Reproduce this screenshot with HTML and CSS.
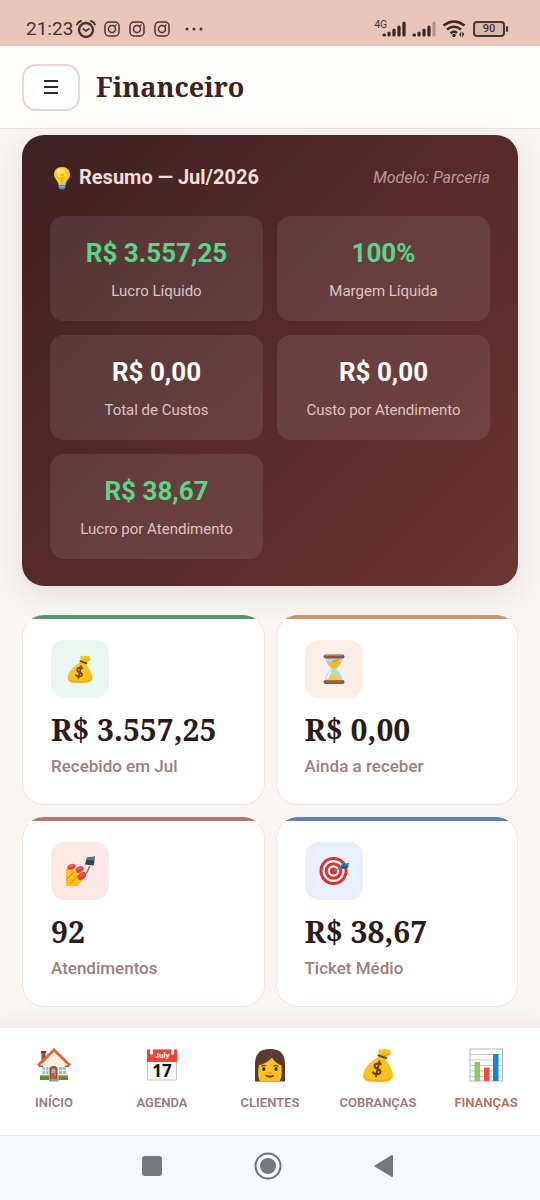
FILE: index.html
```html
<!DOCTYPE html>
<html lang="pt-BR">
<head>
    <meta charset="UTF-8">
    <meta name="viewport" content="width=device-width, initial-scale=1.0">
    <title>Financeiro</title>
    <link rel="stylesheet" href="styles.css">
</head>
<body>

<svg class="sprite" aria-hidden="true">
    <symbol id="insta" viewBox="0 0 16 16">
        <rect x="1" y="1" width="14" height="14" rx="4" fill="none" stroke="#4a3230" stroke-width="1.5"/>
        <circle cx="8" cy="8" r="3.5" fill="none" stroke="#4a3230" stroke-width="1.5"/>
        <path d="M10.500 5.500l1.500-1.500" stroke="#4a3230" stroke-width="1.3" stroke-linecap="round"/>
    </symbol>
    <symbol id="money" viewBox="0 0 32 32">
        <path d="M17 8c-3 2-14 8-15 17-.4 4 2 6 6 6.400 5 .6 12 .5 17-.2 4-.6 5.600-3 5-6.700C29 18 24 12 22 9z" fill="#fcc21b"/>
        <path d="M2.500 25c.5 3.500 4 4.500 9 4.700 7 .3 14 0 17.500-2.500-.6 2.400-2 3.600-4 4-5 .7-12 .8-17 .2-4-.4-6-2.900-5.500-6.400z" fill="#f4ae13"/>
        <path d="M17 7c0-2-1-3.500-.8-5 .6-1.600 2.700-.6 3.700-.1C21 .5 23 0 24 1.700c1.700-.9 4-.4 3.500 1.600 1.600 1 1 2.600-.5 3.200-1.500.5-2 1.700-3 3z" fill="#fcc21b"/>
        <path d="M20 6l4-2M22 7l4-1" stroke="#d99312" stroke-width=".7"/>
        <path d="M16.500 7l7 2.500" stroke="#6d4422" stroke-width="2" stroke-linecap="round"/>
        <path d="M19.300 15.800c-1-1.900-6.500-1.900-6.500 1.200 0 3.500 6.200 2.200 5.500 5.700-.6 2.900-6.300 2.500-7.300-.5M17.500 11.800l-3.600 15.500" fill="none" stroke="#6d4422" stroke-width="2"/>
    </symbol>
</svg>

<div class="statusbar">
    <div class="status-left">
        <span class="clock">21:23</span>
        <svg class="alarm" viewBox="0 0 20 20" width="20" height="20">
            <circle cx="10" cy="11" r="7" fill="none" stroke="#4a3230" stroke-width="2.400"/>
            <path d="M1 5.500Q2 3 5 2M15 2q3 1 4 3.500" fill="none" stroke="#4a3230" stroke-width="2" stroke-linecap="round"/>
            <path d="M7.200 10l2.800 2 2.800-2" fill="none" stroke="#4a3230" stroke-width="1.800" stroke-linecap="round"/>
        </svg>
        <svg class="insta" width="16" height="16"><use href="#insta"/></svg>
        <svg class="insta" width="16" height="16"><use href="#insta"/></svg>
        <svg class="insta" width="16" height="16"><use href="#insta"/></svg>
        <svg class="dots" viewBox="0 0 20 4" width="20" height="4" fill="#4a3230">
            <circle cx="3" cy="2" r="1.500"/><circle cx="10" cy="2" r="1.500"/><circle cx="17" cy="2" r="1.500"/>
        </svg>
    </div>
    <div class="status-right">
        <span class="net">4G</span>
        <svg viewBox="0 0 24 16" width="24" height="16" stroke="#3a2624" stroke-width="3.200" stroke-linecap="round">
            <path d="M2 14h.5M7 14v-2M12 14v-5M17 14v-8M22 14v-12"/>
        </svg>
        <svg class="signal" viewBox="0 0 24 16" width="24" height="16" stroke="#3a2624" stroke-width="3.200" stroke-linecap="round">
            <path d="M2 14h.5M7 14v-2M12 14v-5M17 14v-8"/>
            <path d="M22 14v-12" stroke="#b4928c"/>
        </svg>
        <svg class="wifi" viewBox="0 0 24 18" width="24" height="18">
            <path d="M1.500 5.500Q12-2.500 22.500 5.500M5 9.500q7-5.500 14 0M8.500 13.200q3.500-2.700 6.500-.3" fill="none" stroke="#3a2624" stroke-width="2.600"/>
            <circle cx="12" cy="15.500" r="1.800" fill="#3a2624"/>
            <path d="M17.200 14.500l2-3v6zM20.300 11.500v6l2-3.200z" fill="#3a2624"/>
        </svg>
        <div class="battery">90</div>
    </div>
</div>

<header class="topbar">
    <button class="menu-btn" aria-label="Menu">
        <svg viewBox="0 0 14 14" width="14" height="14" stroke="#3d2422" stroke-width="2"><path d="M0 1h14M0 7h14M0 13h14"/></svg>
    </button>
    <h1>Financeiro</h1>
</header>

<main class="content">
    <section class="resumo">
        <div class="resumo-head">
            <h2>
                <svg viewBox="0 0 20 24" width="20" height="24">
                    <path d="M6 15.500h8l-.8 6q-.2 2-3.200 2t-3.200-2z" fill="#5d8397"/>
                    <path d="M6.500 18.500h7M6.700 20.800h6.500" stroke="#a7c6d2" stroke-width="1"/>
                    <path d="M10 1C4.800 1 2 4.500 2 8.500c0 4.500 3.600 5.300 4.100 9q3.900 1 7.800 0c.5-3.700 4.100-4.500 4.100-9C18 4.500 15.200 1 10 1z" fill="#fbcb1d"/>
                    <circle cx="9.500" cy="7.500" r="4.500" fill="#fde447"/>
                    <path d="M8 8l1.200 2 1-2 1 2 1-2M9 10.500l.5 6M11 10.500l-.3 6" fill="none" stroke="#e79a14" stroke-width=".8"/>
                    <ellipse cx="6.500" cy="4.800" rx="1.500" ry="2" transform="rotate(35 6.500 4.800)" fill="#fff7b0"/>
                </svg>
                Resumo — Jul/2026
            </h2>
            <span class="modelo">Modelo: Parceria</span>
        </div>
        <div class="resumo-grid">
            <div class="resumo-item"><strong class="green">R$ 3.557,25</strong><span>Lucro Líquido</span></div>
            <div class="resumo-item"><strong class="green">100%</strong><span>Margem Líquida</span></div>
            <div class="resumo-item"><strong>R$ 0,00</strong><span>Total de Custos</span></div>
            <div class="resumo-item"><strong>R$ 0,00</strong><span>Custo por Atendimento</span></div>
            <div class="resumo-item"><strong class="green">R$ 38,67</strong><span>Lucro por Atendimento</span></div>
        </div>
    </section>

    <section class="cards">
        <article class="card card-green">
            <div class="card-icon"><svg width="28" height="30"><use href="#money"/></svg></div>
            <div class="card-value">R$ 3.557,25</div>
            <div class="card-label">Recebido em Jul</div>
        </article>
        <article class="card card-orange">
            <div class="card-icon">
                <svg viewBox="0 0 30 30" width="30" height="30">
                    <path d="M6.500 3h17c0 7-3.300 9-6.300 12 3 3 6.300 5 6.300 12h-17c0-7 3.300-9 6.300-12-3-3-6.300-5-6.300-12z" fill="#a9dcea"/>
                    <path d="M8 7.500q5 1.500 14-.8c-.8 3.800-3.500 5.500-5.500 8h-3C12 12 9 10.500 8 7.500z" fill="#fbb914"/>
                    <path d="M13.500 7q4 .5 7-2" stroke="#e28b12" stroke-width="1.500" fill="none"/>
                    <path d="M14.500 14h1v6c2.200 1 4.500 4.500 6.500 7H8c2-3 4.200-6 6.500-7z" fill="#fccb25"/>
                    <path d="M8.500 25c.1-3.500 1.700-5.700 3.500-7.400" fill="none" stroke="#e4f9fc" stroke-width="1.600"/>
                    <rect x="4.500" y=".5" width="21" height="4" rx="2" fill="#8c5543"/>
                    <rect x="4.500" y="26" width="21" height="4" rx="2" fill="#8c5543"/>
                    <path d="M6.500 1.500h17M6.500 27h17" stroke="#b47b62" stroke-width="1"/>
                </svg>
            </div>
            <div class="card-value">R$ 0,00</div>
            <div class="card-label">Ainda a receber</div>
        </article>
        <article class="card card-rose">
            <div class="card-icon">
                <svg viewBox="0 0 30 30" width="30" height="30">
                    <path d="M1 12.500l5-1 4 4 5-1 3 5 2 1-7 9.500H1z" fill="#fcc21b"/>
                    <path d="M2 23l7-7M5 28l9-9.500" stroke="#d38814" stroke-width="1"/>
                    <ellipse cx="6.500" cy="10.700" rx="4.200" ry="2.700" transform="rotate(-18 6.500 10.700)" fill="#e5413c"/>
                    <ellipse cx="14.500" cy="13.500" rx="4.200" ry="3" transform="rotate(-24 14.500 13.500)" fill="#e5413c"/>
                    <ellipse cx="17" cy="20" rx="4.800" ry="3.200" transform="rotate(-42 17 20)" fill="#e5413c"/>
                    <path d="M4 10.500l4-1.300M12.500 13l4-1.600M15 20l3-2.700" stroke="#f9877c" stroke-width=".9" stroke-linecap="round"/>
                    <path d="M24 10l-4.500 9.500 3-2.500 3-6.500z" fill="#688493"/>
                    <path d="M22 1.500l8-1-1.300 9-8.700-1z" fill="#2c424e"/>
                    <path d="M22.500 2l7-.9-.5 3.500-7.500-.6z" fill="#5c7886"/>
                </svg>
            </div>
            <div class="card-value">92</div>
            <div class="card-label">Atendimentos</div>
        </article>
        <article class="card card-blue">
            <div class="card-icon">
                <svg viewBox="0 0 30 30" width="30" height="30">
                    <circle cx="14.500" cy="15" r="14" fill="#d9332f"/>
                    <circle cx="14.500" cy="15" r="11" fill="#fff"/>
                    <circle cx="14.500" cy="15" r="8.800" fill="#d9332f"/>
                    <circle cx="14.500" cy="15" r="5.800" fill="#fff"/>
                    <circle cx="14.500" cy="15" r="3.600" fill="#d9332f"/>
                    <path d="M15 15l9-4" stroke="#5d86ad" stroke-width="1.400"/>
                    <path d="M21 11l4-6 1 2.500 4-.5-1 4.500-5 1.700z" fill="#1c78bd"/>
                    <path d="M22 12l6 .3 1.500-2.500-5 .2z" fill="#0c5695"/>
                </svg>
            </div>
            <div class="card-value">R$ 38,67</div>
            <div class="card-label">Ticket Médio</div>
        </article>
    </section>
</main>

<nav class="bottom-nav">
    <a href="#">
        <svg viewBox="0 0 34 34" width="34" height="34">
            <path d="M4.500 4h4v11h-4z" fill="#a34d2c"/>
            <path d="M4 3h5v2H4z" fill="#7c3b25"/>
            <path d="M4 17L17 3.500 30 17v14H4z" fill="#faf1df"/>
            <path d="M1 17.500L17 2l16 15.500" fill="none" stroke="#d8693c" stroke-width="3"/>
            <path d="M2 18.200h4M28 18.200h4" stroke="#b84e2d" stroke-width="1.400"/>
            <path d="M12.500 32V21q0-3 4-3t4 3v11z" fill="#a8432d"/>
            <path d="M14 31v-9.500q0-2 2.500-2t2.500 2V31z" fill="#c75c3e"/>
            <rect x="14.800" y="21" width="3.400" height="4" rx="1" fill="#91bbca"/>
            <path d="M5.500 19h6v7h-6zM22 19h7v7h-7z" fill="#89c9d8"/>
            <path d="M8.500 19v7M5.500 22.500h6M25.500 19v7M22 22.500h7" stroke="#f5efe2" stroke-width="1"/>
            <path d="M3 27.500h9V32H3zM21.500 27.500H31V32h-9.500z" fill="#5f8a36"/>
            <path d="M3 28h9M21.500 28H31" stroke="#87ad45" stroke-width="1"/>
            <path d="M12 31h9.500v2.500H12z" fill="#9a9a9a"/>
            <circle cx="18" cy="26.500" r=".7" fill="#fbd254"/>
        </svg>
        <span>Início</span>
    </a>
    <a href="#">
        <svg viewBox="0 0 34 34" width="34" height="34">
            <rect x="2.500" y="2" width="29" height="30" rx="1" fill="#fafafa" stroke="#c4c8ca"/>
            <path d="M2 1.500h30V14H2z" fill="#f1443a"/>
            <path d="M6.500 1v4M27.500 1v4" stroke="#fff" stroke-width="2.600" stroke-linecap="round"/>
            <circle cx="6.500" cy="5" r="1.800" fill="#fff"/><circle cx="27.500" cy="5" r="1.800" fill="#fff"/>
            <text class="cal-month" x="17" y="10">July</text>
            <text class="cal-day" x="17" y="29">17</text>
        </svg>
        <span>Agenda</span>
    </a>
    <a href="#">
        <svg viewBox="0 0 34 34" width="34" height="34">
            <path d="M17 1C6 1 2 7 2 16v17.500h30V16C32 7 28 1 17 1z" fill="#573b31"/>
            <path d="M7 33.500C4.500 29 5 22 6 17c5-1 10-3.500 13-7.500 1.500 3.500 5 6 9.500 8C29 23 29 29 26.500 33.500z" fill="#fcc21b"/>
            <path d="M19 3C18 11 11 16 5 17" fill="none" stroke="#704d3d" stroke-width="1.300"/>
            <path d="M8.500 18.500q2.500-2 4.500-.2M20.500 18.300q2.500-1.800 4.500.2" fill="none" stroke="#704526" stroke-width="1.200"/>
            <ellipse cx="10.800" cy="21" rx="1.600" ry="1.900" fill="#3d3030"/>
            <ellipse cx="23" cy="21" rx="1.600" ry="1.900" fill="#3d3030"/>
            <path d="M15.500 24.500q1.500 1 3 0" fill="none" stroke="#e39a18" stroke-width="1.400" stroke-linecap="round"/>
            <path d="M12.500 27.500q4.500 3.500 8.500 0-4 1-8.500 0z" fill="#7c3b25" stroke="#7c3b25"/>
        </svg>
        <span>Clientes</span>
    </a>
    <a href="#">
        <svg width="34" height="34"><use href="#money"/></svg>
        <span>Cobranças</span>
    </a>
    <a href="#" class="active">
        <svg viewBox="0 0 34 34" width="34" height="34">
            <rect x="1" y="1" width="32.500" height="32" fill="#fdfdfd" stroke="#adb8bd"/>
            <path d="M1 6.500h32M1 12h32M1 17.500h32M1 23h32M1 28.500h32" stroke="#c2ced3" stroke-width="1"/>
            <path d="M5.500 14h5.500v19H5.500z" fill="#94c45d"/>
            <path d="M15 19.500h5.500V33H15z" fill="#ef4a3c"/>
            <path d="M24 6h5.500v27H24z" fill="#1588d1"/>
        </svg>
        <span>Finanças</span>
    </a>
</nav>

<div class="sysbar">
    <button aria-label="Recentes"><svg viewBox="0 0 28 28" width="28" height="28"><rect x="4" y="4" width="20" height="20" rx="3" fill="#77787a"/></svg></button>
    <button aria-label="Tela inicial"><svg viewBox="0 0 28 28" width="28" height="28"><circle cx="14" cy="14" r="12.500" fill="none" stroke="#6f7073" stroke-width="2"/><circle cx="14" cy="14" r="8" fill="#77787a"/></svg></button>
    <button aria-label="Voltar"><svg viewBox="0 0 28 28" width="28" height="28"><path d="M5.500 14L22 4v20z" fill="#77787a" stroke="#77787a" stroke-width="2" stroke-linejoin="round"/></svg></button>
</div>

</body>
</html>
```
FILE: styles.css
```css
* { box-sizing: border-box; margin: 0; padding: 0; }
body { font-family: Roboto, Arial, sans-serif; background: #faf6f4; color: #2b1b1a; min-height: 100vh; display: flex; flex-direction: column; }
svg { display: block; flex-shrink: 0; }
button { font: inherit; cursor: pointer; }
.sprite { position: absolute; width: 0; height: 0; }

/* status */
.statusbar { height: 46px; padding: 12px 35px 0 26px; background: #e9c5ba; color: #4a3230; display: flex; align-items: center; justify-content: space-between; }
.status-left, .status-right { display: flex; align-items: center; }
.clock { font-size: 19px; line-height: 22px; margin-right: 3px; }
.insta { margin-left: 9px; }
.alarm + .insta { margin-left: 8px; }
.dots { margin-left: 14px; }
.net { font-size: 10px; line-height: 10px; align-self: flex-start; margin-right: -5px; }
.signal { margin-left: 6px; }
.wifi { margin-left: 6px; }
.battery { position: relative; width: 32px; height: 16px; margin-left: 7px; border: 2px solid #4a3230; border-radius: 4px; background: #d9b8af; font-size: 11px; line-height: 12px; font-weight: 500; text-align: center; }
.battery::after { content: ""; position: absolute; right: -5px; top: 3px; width: 2px; height: 6px; background: #4a3230; border-radius: 1px; }

/* header */
.topbar { height: 83px; padding: 0 22px; background: #fffefd; border-bottom: 1px solid #efe6e2; display: flex; align-items: center; gap: 16px; }
.menu-btn { width: 58px; height: 47px; border: 2px solid #ead6d0; border-radius: 14px; background: #fff; display: flex; align-items: center; justify-content: center; }
h1 { font-family: "Noto Serif", "Liberation Serif", serif; font-size: 27px; line-height: 36px; font-weight: 700; color: #3d2422; }

.content { flex: 1; padding: 6px 22px 20px; }

/* resumo */
.resumo { padding: 28px 28px 27px; border-radius: 22px; background: linear-gradient(135deg, #3d2022, #572a2b 50%, #6b3533); box-shadow: 0 8px 32px rgba(61, 32, 34, 0.12); }
.resumo-head { display: flex; align-items: center; justify-content: space-between; margin-bottom: 24px; }
h2 { display: flex; align-items: center; gap: 7px; padding-left: 2px; font-size: 20px; line-height: 29px; font-weight: 700; color: #f1dfdb; }
.modelo { font-size: 16px; font-style: italic; color: #b79c98; }
.resumo-grid { display: grid; grid-template-columns: 1fr 1fr; gap: 14px; }
.resumo-item { padding: 21px 8px 20px; border-radius: 14px; background: rgba(255, 255, 255, 0.09); text-align: center; }
.resumo-item strong { display: block; font-size: 26px; line-height: 32px; color: #fff; }
.resumo-item .green { color: #5bd688; }
.resumo-item span { display: block; margin-top: 13px; font-size: 15px; line-height: 19px; color: #dcc6c2; }

/* cards */
.cards { display: grid; grid-template-columns: 1fr 1fr; gap: 12px 11px; margin-top: 29px; }
.card { --accent: #57966f; --soft: #eaf6f0; padding: 24px 28px 28px; border: 1px solid #f0e7e4; border-top-color: transparent; border-radius: 22px; background: linear-gradient(var(--accent), var(--accent)) top / 100% 4px no-repeat border-box, #fff; }
.card-orange { --accent: #cb9270; --soft: #fcefe8; }
.card-rose { --accent: #b4776b; --soft: #fce8e4; }
.card-blue { --accent: #5c81bd; --soft: #e9effd; }
.card-icon { width: 58px; height: 58px; border-radius: 14px; background: var(--soft); display: flex; align-items: center; justify-content: center; }
.card-value { margin-top: 14px; font-family: "Noto Serif", "Liberation Serif", serif; font-size: 30px; line-height: 36px; font-weight: 700; }
.card-label { margin-top: 8px; font-size: 17px; line-height: 20px; font-weight: 500; color: #9b7f7b; }

/* nav */
.bottom-nav { height: 107px; padding-top: 20px; background: #fff; display: grid; grid-template-columns: repeat(5, 1fr); box-shadow: 0 -4px 20px rgba(61, 32, 34, 0.07); }
.bottom-nav a { display: flex; flex-direction: column; align-items: center; gap: 13px; color: #9b7b79; text-decoration: none; }
.bottom-nav span { font-size: 13px; line-height: 16px; font-weight: 600; text-transform: uppercase; }
.bottom-nav .active { color: #b4705f; }
.cal-month { font: 700 8px Roboto, sans-serif; fill: #fff; text-anchor: middle; }
.cal-day { font: 700 17px "Open Sans", sans-serif; fill: #111; text-anchor: middle; }

.sysbar { height: 65px; padding: 0 4px 4px 0; border-top: 1px solid #e8e8ee; background: #f7f8fe; display: flex; align-items: center; justify-content: center; gap: 88px; }
.sysbar button { border: 0; background: none; }
```
